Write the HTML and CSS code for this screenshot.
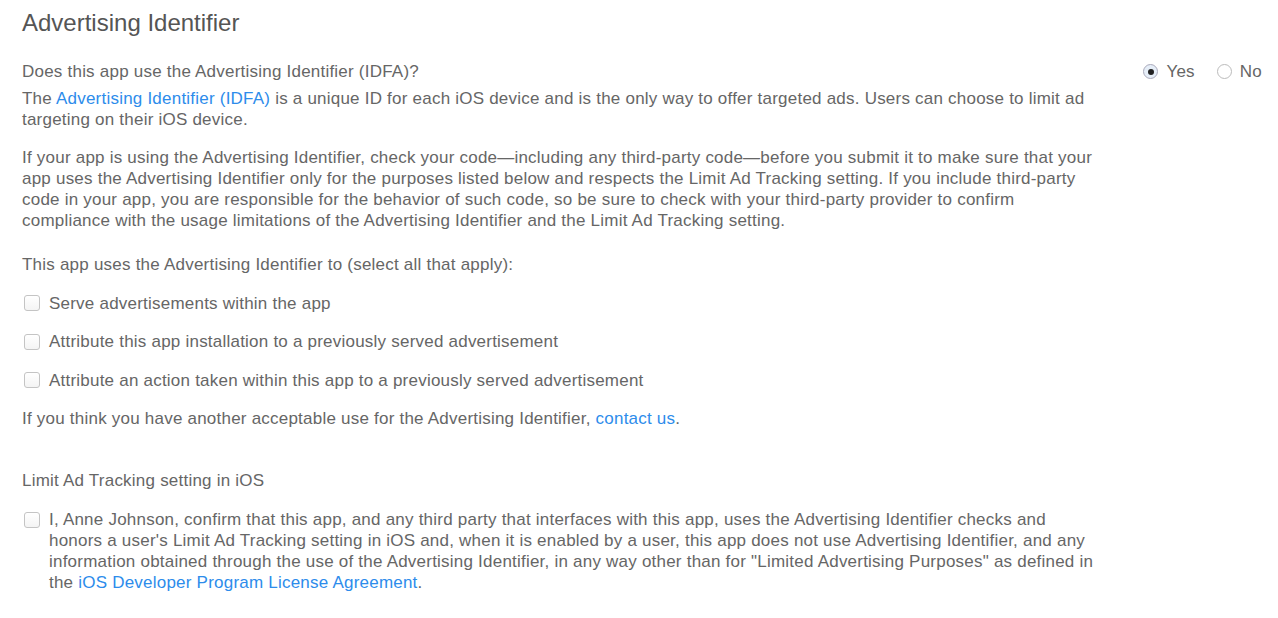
FILE: index.html
```html
<!DOCTYPE html>
<html lang="en">
<head>
  <meta charset="UTF-8" />
  <meta name="viewport" content="width=device-width, initial-scale=1.0"/>
  <title>Advertising Identifier</title>
  <link rel="stylesheet" href="styles.css">
</head>
<body>
  <div class="section">
    <h2 class="title">Advertising Identifier</h2>

    <div class="question-row">
      <div class="question">Does this app use the Advertising Identifier (IDFA)?</div>
      <div class="radios">
        <label class="radio"><span class="radio-dot checked"></span>Yes</label>
        <label class="radio"><span class="radio-dot"></span>No</label>
      </div>
    </div>

    <div class="text-col">
      <p class="intro">The <a href="#">Advertising Identifier (IDFA)</a> is a unique ID for each iOS device and is the only way to offer targeted ads. Users can choose to limit ad targeting on their iOS device.</p>

      <p class="note">If your app is using the Advertising Identifier, check your code—including any third-party code—before you submit it to make sure that your app uses the Advertising Identifier only for the purposes listed below and respects the Limit Ad Tracking setting. If you include third-party code in your app, you are responsible for the behavior of such code, so be sure to check with your third-party provider to confirm compliance with the usage limitations of the Advertising Identifier and the Limit Ad Tracking setting.</p>

      <div class="uses">
        <div>This app uses the Advertising Identifier to (select all that apply):</div>
        <label class="check"><span class="box"></span>Serve advertisements within the app</label>
        <label class="check"><span class="box"></span>Attribute this app installation to a previously served advertisement</label>
        <label class="check"><span class="box"></span>Attribute an action taken within this app to a previously served advertisement</label>
        <div>If you think you have another acceptable use for the Advertising Identifier, <a href="#">contact us</a>.</div>
      </div>

      <div class="limit">Limit Ad Tracking setting in iOS</div>
      <label class="check confirm"><span class="box"></span><span>I, Anne Johnson, confirm that this app, and any third party that interfaces with this app, uses the Advertising Identifier checks and honors a user's Limit Ad Tracking setting in iOS and, when it is enabled by a user, this app does not use Advertising Identifier, and any information obtained through the use of the Advertising Identifier, in any way other than for "Limited Advertising Purposes" as defined in the <a href="#">iOS Developer Program License Agreement</a>.</span></label>
    </div>
  </div>
</body>
</html>
```

FILE: styles.css
```css
body {
  margin: 0;
  background: #fff;
  color: #666;
  font-family: "Liberation Sans", Arial, sans-serif;
  font-size: 17px;
  letter-spacing: 0.22px;
  line-height: 21px;
}
a {
  color: #2d8ceb;
  text-decoration: none;
}
.section {
  padding: 8px 16px 0 22px;
}
.title {
  margin: 0;
  font-size: 24px;
  font-weight: normal;
  letter-spacing: 0;
  line-height: 30px;
  color: #555;
}
.question-row {
  display: flex;
  justify-content: space-between;
  margin-top: 23px;
}
.radios {
  display: flex;
  gap: 22px;
}
.radio {
  display: flex;
  align-items: center;
  gap: 8px;
}
.radio-dot {
  width: 13px;
  height: 13px;
  border: 1px solid #bbb;
  border-radius: 50%;
  background: #fff;
  position: relative;
}
.radio-dot.checked {
  background: #e6eef8;
  border-color: #aab;
}
.radio-dot.checked::after {
  content: "";
  position: absolute;
  left: 3.5px;
  top: 3.5px;
  width: 6px;
  height: 6px;
  border-radius: 50%;
  background: #222;
}
.text-col {
  width: 1080px;
}
.intro {
  margin: 6px 0 0;
}
.note {
  margin: 17px 0 0;
}
.uses {
  display: flex;
  flex-direction: column;
  gap: 17.5px;
  margin-top: 23px;
}
.check {
  display: flex;
  align-items: center;
  gap: 9px;
  padding-left: 2px;
}
.box {
  flex: none;
  width: 14px;
  height: 14px;
  border: 1px solid #c4c4c4;
  border-radius: 3px;
  background: linear-gradient(#fff, #f4f4f4);
}
.limit {
  margin-top: 41px;
}
.confirm {
  align-items: flex-start;
  margin-top: 18px;
}
.confirm .box {
  margin-top: 3px;
}
```
